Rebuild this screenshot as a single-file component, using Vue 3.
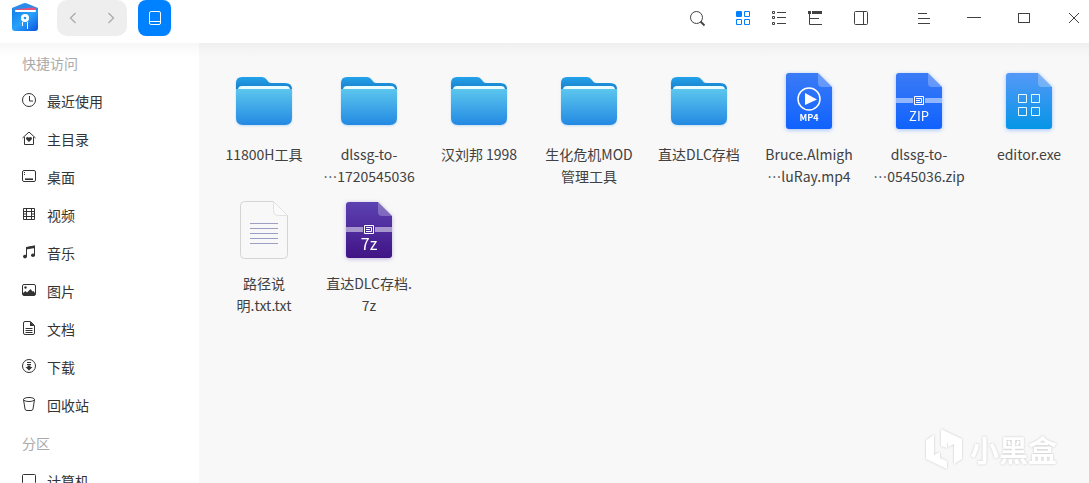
<script setup>
const places = [
  { name: '最近使用', art: '<circle cx="7" cy="7" r="6.5"/><path d="M7.5 3v5H11"/>' },
  { name: '主目录', art: '<path d="M.5 7 7 1l6.500 6M2.500 6v7.500h9V6"/><path class="solid" d="M7 11 4.200 8.200c-.8-1.800 1.600-3 2.800-1.400 1.200-1.600 3.600-.4 2.800 1.400z"/>' },
  { name: '桌面', art: '<rect x=".5" y="1.500" width="13" height="11" rx="1.500"/><path d="M2 3.500h1M2 5.500h1"/><path d="M3 10.200h8" stroke-width="1.600"/>' },
  { name: '视频', art: '<path d="M1.500 1.500h11v11h-11zM4.500 1.500v11M9.500 1.500v11M4.500 4.500h5M4.500 9.500h5M1.500 4.500h3M1.500 7h3M1.500 9.500h3M9.500 4.500h3M9.500 7h3M9.500 9.500h3"/>' },
  { name: '音乐', art: '<path d="M4.500 11.500V2.500l8-1.500v9.500"/><path class="solid" d="M4 2.200 13 .5v2.500L4 4.500z"/><ellipse class="solid" cx="3" cy="11.600" rx="2" ry="1.800"/><ellipse class="solid" cx="11" cy="10.300" rx="2" ry="1.800"/>' },
  { name: '图片', art: '<rect x=".5" y="1.500" width="13" height="11" rx="1.500"/><circle class="solid" cx="3.500" cy="4.500" r="1.200"/><path class="solid" d="M1 12v-2l2.500-2L5 9.500 8.500 6l2 2.500L11.500 8 13 10v2z"/>' },
  { name: '文档', art: '<path d="M8.500.5H3A1.500 1.500 0 0 0 1.500 2v10A1.500 1.500 0 0 0 3 13.500h8a1.500 1.500 0 0 0 1.500-1.500V4.500zM3.500 7.500h7M3.500 9.500h7M3.500 11.500h7"/><path class="solid" d="M8 .5v4.500h4.500z"/>' },
  { name: '下载', art: '<circle cx="7" cy="7" r="6.500"/><path d="M5 3.500h4M5 5.500h4"/><path class="solid" d="M5.500 6.500h3V8H10.500L7 11.500 3.500 8h2z"/>' },
  { name: '回收站', art: '<ellipse cx="7" cy="2.500" rx="5.500" ry="2"/><path d="M1.500 2.500 3 12q.3 1.500 2 1.500h4q1.700 0 2-1.500l1.500-9.500"/>' }
]
const drives = [
  { name: '计算机', art: '<rect x=".5" y="1.500" width="13" height="9" rx="1"/><path d="M3 13.500h8"/>' }
]
const groups = [
  { title: '快捷访问', items: places },
  { title: '分区', items: drives }
]
const files = [
  { kind: 'folder', lines: ['11800H工具'] },
  { kind: 'folder', lines: ['dlssg-to-', '1720545036'], elided: true },
  { kind: 'folder', lines: ['汉刘邦 1998'] },
  { kind: 'folder', lines: ['生化危机MOD', '管理工具'] },
  { kind: 'folder', lines: ['直达DLC存档'] },
  { kind: 'mp4', lines: ['Bruce.Almigh', 'luRay.mp4'], elided: true },
  { kind: 'zip', lines: ['dlssg-to-', '0545036.zip'], elided: true },
  { kind: 'exe', lines: ['editor.exe'] },
  { kind: 'txt', lines: ['路径说', '明.txt.txt'] },
  { kind: '7z', lines: ['直达DLC存档.', '7z'] }
]
const views = [
  { label: '图标视图', active: true, art: '<rect class="solid" x="0" y="0" width="6" height="6" rx="1"/><path d="M8.500.5h5v5h-5zM.5 8.500h5v5h-5zM8.500 8.500h5v5h-5z" stroke-linejoin="round"/>' },
  { label: '列表视图', active: false, art: '<path d="M.5.5h2v2h-2zM.5 5.500h2v2h-2zM.5 11.500h2v2h-2zM5 1.500h9M5 6.500h9M5 12.500h9"/>' },
  { label: '树形视图', active: false, art: '<path class="solid" d="M0 0h3v3H0zM4 0h10v3H4z"/><path d="M1.500 2v11.500H14M1.500 7.500H11"/>' }
]
const fill = { mp4: 'url(#blueDoc)', zip: 'url(#blueDoc)', exe: 'url(#skyDoc)', '7z': 'url(#violetDoc)' }
</script>

<template>
  <div class="window">
    <header class="bar">
      <svg class="logo" width="26" height="28" viewBox="0 0 26 28" aria-hidden="true">
        <path d="M0 5 11 .5q2-.8 4 0L26 5v8H0z" fill="#2a8ce8" />
        <path d="M3 6.500 20 4.500q3-.3 4 1V8H3z" fill="#e8507e" />
        <path d="M0 5q1 4 4 4h18q3 0 4-4v20q0 3-3 3H3q-3 0-3-3z" fill="url(#logoFill)" />
        <rect x="3" y="7" width="21" height="2" rx="1" fill="#fff" />
        <circle cx="13" cy="15" r="4" fill="#fff" />
        <circle cx="13" cy="15" r="1.300" fill="#2494ef" />
        <path d="M10.500 19v4M15.500 19v7" stroke="#fff" stroke-width="1" />
      </svg>
      <div class="history">
        <button aria-label="后退"><svg width="14" height="14" viewBox="0 0 14 14"><path d="M9.500 2 4.500 7l5 5" stroke-width="1.300" /></svg></button>
        <button aria-label="前进"><svg width="14" height="14" viewBox="0 0 14 14"><path d="m4.500 2 5 5-5 5" stroke-width="1.300" /></svg></button>
      </div>
      <button class="device" aria-label="设备">
        <svg width="14" height="14" viewBox="0 0 14 14"><rect x="1.500" y=".5" width="11" height="13" rx="1.500" /><path d="M1.500 10.500h11" /></svg>
      </button>
      <div class="tools">
        <button class="tool" aria-label="搜索">
          <svg width="14" height="14" viewBox="0 0 14 14"><circle cx="6.500" cy="6.500" r="6" /><path d="m10.500 10.500 4 4" stroke-width="1.800" /></svg>
        </button>
        <div class="views">
          <button v-for="v in views" :key="v.label" class="tool" :class="{ active: v.active }" :aria-label="v.label" :aria-pressed="v.active">
            <svg width="14" height="14" viewBox="0 0 14 14" v-html="v.art"></svg>
          </button>
        </div>
        <button class="tool" aria-label="详细信息">
          <svg width="14" height="14" viewBox="0 0 14 14"><rect x=".5" y=".5" width="13" height="13" rx="1" /><path d="M9.500 0v14" /></svg>
        </button>
      </div>
      <div class="controls">
        <button aria-label="菜单"><svg width="14" height="14" viewBox="0 0 14 14"><path d="M1 2.500h9M1 7.500h12M1 12.500h12" /></svg></button>
        <button aria-label="最小化"><svg width="14" height="14" viewBox="0 0 14 14"><path d="M0 6.500h14" /></svg></button>
        <button aria-label="最大化"><svg width="14" height="14" viewBox="0 0 14 14"><rect x="1.500" y="2.500" width="11" height="9" /></svg></button>
        <button aria-label="关闭"><svg width="14" height="14" viewBox="0 0 14 14"><path d="m2 2 10 10M12 2 2 12" /></svg></button>
      </div>
    </header>

    <div class="body">
      <nav class="side">
        <section v-for="g in groups" :key="g.title">
          <h2>{{ g.title }}</h2>
          <a v-for="p in g.items" :key="p.name" href="#">
            <svg width="14" height="14" viewBox="0 0 14 14" aria-hidden="true" v-html="p.art"></svg>
            <span>{{ p.name }}</span>
          </a>
        </section>
      </nav>

      <main class="files">
        <button v-for="f in files" :key="f.lines.join('')" class="file">
          <svg v-if="f.kind === 'folder'" class="pic folder" width="64" height="64" viewBox="0 0 64 64" aria-hidden="true">
            <path d="M4 20v-6q0-6 6-6h20q3 0 5 3l1.500 2q1 1 3 1H53q7 0 7 6z" fill="url(#folderBack)" />
            <path d="M6 22v-1q0-4 4-4h44q4 0 4 4v1z" fill="#e8fbff" />
            <path d="M4 20h56v29q0 7-7 7H11q-7 0-7-7z" fill="url(#folderFront)" />
          </svg>
          <svg v-else class="pic" :class="'doc-' + f.kind" width="64" height="64" viewBox="0 0 64 64" aria-hidden="true">
            <path v-if="f.kind === 'txt'" d="M12.500 3.500h29l14 14v39q0 4-4 4h-39q-4 0-4-4v-49q0-4 4-4z" fill="#f8f8f8" stroke="#d4d4d4" />
            <path v-else d="M12 4h29l14 14v39q0 3-3 3H12q-3 0-3-3V7q0-3 3-3z" :fill="fill[f.kind]" />
            <path v-if="f.kind === 'txt'" d="M41.500 3.500v9q0 5 5 5h9z" fill="#fafafa" stroke="#e2e2e2" />
            <path v-else d="M41 4v10q0 4 4 4h10z" fill="#fff" fill-opacity=".25" />
            <template v-if="f.kind === 'mp4'">
              <circle cx="32" cy="30" r="11" fill="none" stroke="#fff" stroke-width="1.500" />
              <path d="m28 24 12 6.500L28 36z" fill="#fff" stroke="none" />
              <text class="bold" x="32" y="52" font-size="9">MP4</text>
            </template>
            <path v-else-if="f.kind === 'txt'" d="M18 25.500h28M18 30.500h28M18 35.500h28M18 40.500h28M18 45.500h28" stroke="#9c9fc4" />
            <path v-else-if="f.kind === 'exe'" d="M21.500 25.500h8v8h-8zM34.500 25.500h8v8h-8zM21.500 38.500h8v8h-8zM34.500 38.500h8v8h-8z" fill="none" stroke="#e4fbff" />
            <template v-else>
              <path d="M9 29h46v5H9z" fill="#fff" fill-opacity=".5" />
              <path d="M26 26h12v11H26z" :fill="f.kind === 'zip' ? '#2c70f8' : '#4c2a9c'" />
              <path d="M27.500 27.500h9v8h-9zM29 29.500h5.500v4H29M29 31.500h4" fill="none" stroke="#fff" />
              <text v-if="f.kind === 'zip'" x="32" y="52" font-size="13">ZIP</text>
              <text v-else x="32" y="52" font-size="16">7z</text>
            </template>
          </svg>
          <span v-for="(line, i) in f.lines" :key="line" class="name"><span v-if="f.elided && i === 1" class="dots">…</span>{{ line }}</span>
        </button>
      </main>
    </div>

    <div class="mark">
      <svg width="38" height="42" viewBox="0 0 38 42" aria-hidden="true">
        <path d="M1 12 9 7v20l6-3v6l7 3v8L1 31z" />
        <path d="M16 1 37 11v20l-8 5V16l-6 3v-6l-1 7-6-2z" />
      </svg>
      <span>小黑盒</span>
    </div>

    <svg class="defs" width="0" height="0" aria-hidden="true">
      <defs>
        <linearGradient id="logoFill" x1="0" y1="0" x2="1" y2="1"><stop offset="0" stop-color="#0f7ae8" /><stop offset=".5" stop-color="#2aa2fa" /><stop offset="1" stop-color="#0a52e0" /></linearGradient>
        <linearGradient id="folderBack" x1="0" y1="0" x2="0" y2="1"><stop offset="0" stop-color="#23a3ea" /><stop offset="1" stop-color="#1a7fcb" /></linearGradient>
        <linearGradient id="folderFront" x1="0" y1="0" x2="0" y2="1"><stop offset="0" stop-color="#5cc6ee" /><stop offset="1" stop-color="#2389e2" /></linearGradient>
        <linearGradient id="blueDoc" x1="0" y1="0" x2="0" y2="1"><stop offset="0" stop-color="#3a7bf6" /><stop offset="1" stop-color="#1062fe" /></linearGradient>
        <linearGradient id="skyDoc" x1="0" y1="0" x2="0" y2="1"><stop offset="0" stop-color="#5599f8" /><stop offset="1" stop-color="#0595e6" /></linearGradient>
        <linearGradient id="violetDoc" x1="0" y1="0" x2="0" y2="1"><stop offset="0" stop-color="#5c42b2" /><stop offset="1" stop-color="#401485" /></linearGradient>
      </defs>
    </svg>
  </div>
</template>

<style>
body { overflow: hidden; }
</style>

<style scoped>
.window {
  position: relative;
  display: flex;
  flex-direction: column;
  height: 100vh;
  overflow: hidden;
  background: #fff;
  color: #414141;
  font: 14px/22px "Noto Sans CJK SC", sans-serif;
}
button {
  padding: 0;
  border: 0;
  background: none;
  color: inherit;
  font: inherit;
}
svg { overflow: visible; flex: none; }
.bar svg, .side svg { display: block; }
.bar button svg, .side svg {
  fill: none;
  stroke: currentColor;
}
.window :deep(.solid) { fill: currentColor; stroke: none; }

.bar {
  display: flex;
  align-items: flex-start;
  height: 43px;
  flex: none;
  padding-left: 12px;
}
.bar button {
  display: flex;
  align-items: center;
  justify-content: center;
  height: 36px;
}
.logo { margin-top: 3px; }
.history {
  display: flex;
  gap: 6px;
  margin-left: 19px;
  border-radius: 10px;
  background: #eee;
  color: #aaa;
}
.history button { width: 32px; }
.device {
  width: 33px;
  margin-left: 11px;
  border-radius: 8px;
  background: #0081ff;
}
.bar .device { background: #0081ff; color: #fff; }
.tools {
  display: flex;
  gap: 10px;
  margin-left: auto;
}
.views { display: flex; }
.tool { width: 36px; }
.bar .active { color: #0081ff; }
.controls {
  display: flex;
  gap: 20px;
  margin-left: 30px;
}
.controls button { width: 30px; }

.body {
  display: flex;
  flex: 1;
  min-height: 0;
}
.side {
  width: 199px;
  flex: none;
  box-sizing: border-box;
  padding-top: 1px;
  overflow: hidden;
  background: linear-gradient(#f7f7f7, #fff 14px);
}
.side h2, .side a {
  display: flex;
  align-items: center;
  height: 38px;
  margin: 0;
  padding-left: 22px;
  gap: 11px;
}
.side svg { margin-bottom: 2px; }
.side h2 {
  color: #aaa;
  font-size: 14px;
  font-weight: 400;
}
.side a {
  color: #333;
  text-decoration: none;
}
.files {
  display: grid;
  flex: 1;
  grid-template-columns: 100px repeat(auto-fill, 110px);
  grid-auto-rows: 129px;
  align-content: start;
  padding: 26px 0 0 15px;
  background: linear-gradient(#f0f0f0, #f8f8f8 14px);
}
.file {
  display: flex;
  flex-direction: column;
  align-items: center;
}
.pic { margin-bottom: 10px; }
.pic text {
  fill: #fff;
  text-anchor: middle;
  font-family: "Noto Sans CJK SC", sans-serif;
}
.pic .bold { font-weight: 700; }
.folder { filter: drop-shadow(0 1px 1px #2389e240); }
.doc-mp4, .doc-zip, .doc-exe { filter: drop-shadow(0 1px 2px #1062fe60); }
.doc-7z { filter: drop-shadow(0 1px 2px #5c42b260); }
.name { white-space: nowrap; }
.dots { display: inline-block; }

.mark {
  position: absolute;
  right: 32px;
  bottom: 13px;
  display: flex;
  align-items: center;
  gap: 7px;
  color: #fff;
  font-size: 29px;
  line-height: 42px;
  font-weight: 700;
  filter: drop-shadow(0 0 1px #0003);
}
.mark svg { fill: #fff; }
.defs { position: absolute; }
</style>
